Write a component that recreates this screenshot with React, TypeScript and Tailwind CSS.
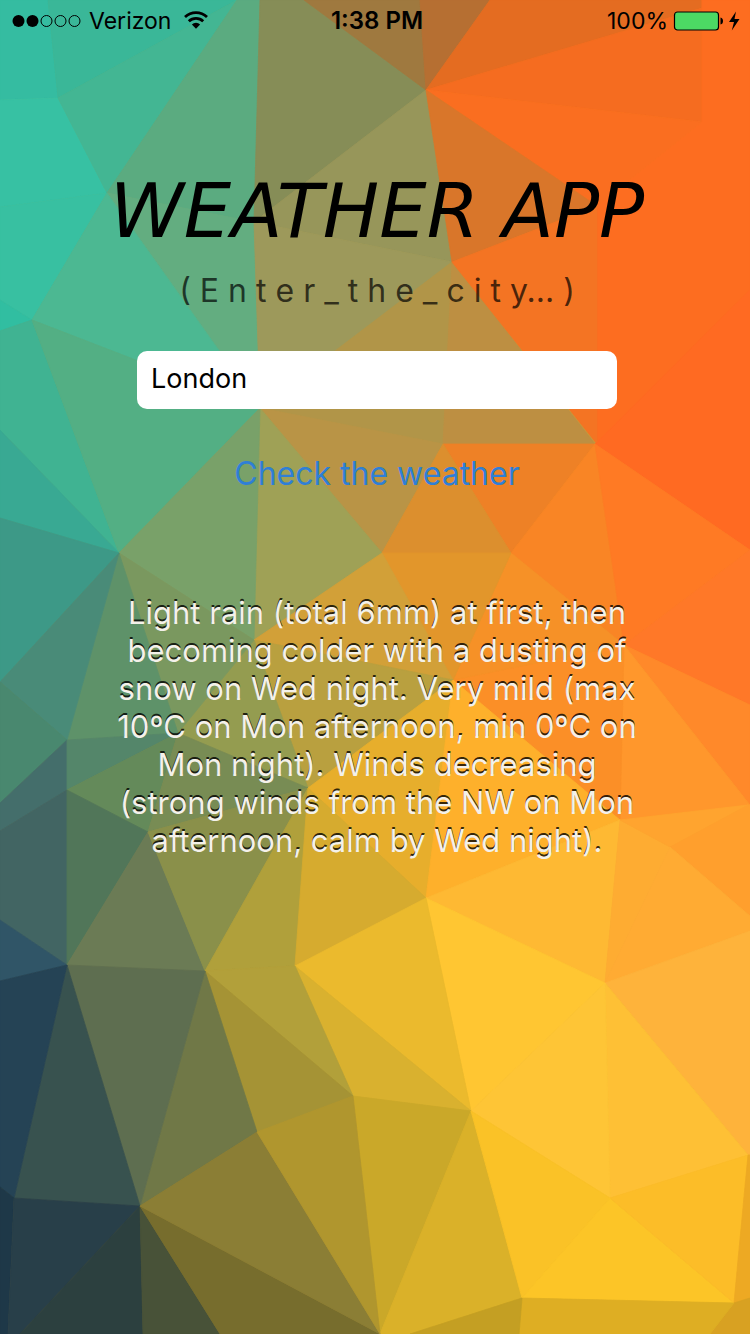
import { useState } from "react";

type Facet = [fill: string, points: string];

const FACETS: Facet[] = [
  // upper left
  ["#35bca1", "0,0 48,0 58,98 0,100"],
  ["#37c1a3", "0,100 58,98 107,193 0,207"],
  ["#38c0a1", "0,207 107,193 32,320 0,300"],
  ["#31bea1", "0,300 32,320 0,331"],
  ["#3ab798", "48,0 160,0 237,0 58,98"],
  ["#43b693", "58,98 237,0 107,193"],
  ["#5bab80", "237,0 260,0 254,222 107,193"],
  ["#63ad80", "107,193 254,222 260,408"],
  ["#4cb892", "107,193 260,408 32,320"],
  ["#40b392", "0,331 32,320 119,553 0,430"],
  ["#53af84", "32,320 260,408 119,553"],
  ["#39a993", "0,430 119,553 0,518"],
  ["#3d9987", "0,518 119,553 0,682"],
  // upper middle
  ["#868d57", "260,0 304,0 426,90 254,222"],
  ["#9f793f", "304,0 420,0 426,90"],
  ["#b66f32", "420,0 490,0 426,90"],
  ["#97965a", "426,90 452,262 254,222"],
  ["#9d995b", "254,222 452,262 260,408"],
  ["#b19548", "260,408 452,262 443,444"],
  ["#bd8f42", "452,262 595,444 443,444"],
  ["#b99446", "260,408 443,444 382,553"],
  ["#9fa156", "260,408 382,553 254,640"],
  ["#79a169", "260,408 254,640 119,553"],
  // upper right
  ["#e46c21", "490,0 702,0 702,8 426,90"],
  ["#f36e20", "702,0 750,0 750,140 702,122"],
  ["#f56c20", "426,90 702,8 702,122"],
  ["#fa6e20", "426,90 702,122 597,206"],
  ["#fd6d20", "702,0 750,0 750,300 597,444 597,206 702,122"],
  ["#d9762a", "426,90 597,206 452,262"],
  ["#f47423", "452,262 597,206 597,444"],
  ["#ff6a22", "750,290 750,550 595,444"],
  ["#ee8126", "443,444 595,444 511,553"],
  ["#dc8f2e", "443,444 511,553 382,553"],
  // middle right
  ["#f98525", "595,444 624,645 511,553"],
  ["#ff7a24", "595,444 750,550 624,645"],
  ["#ff7828", "750,550 750,705 624,645"],
  ["#ff892a", "624,645 750,705 750,805"],
  ["#ff972c", "624,645 750,805 620,820"],
  ["#fb8f27", "453,680 624,645 620,820"],
  ["#f69127", "511,553 624,645 453,680"],
  ["#e2962b", "382,553 511,553 453,680"],
  ["#d2a038", "382,553 453,680 254,640"],
  ["#b9a03f", "254,640 453,680 308,788"],
  ["#949c50", "254,640 308,788 178,733"],
  ["#7a985f", "119,553 254,640 178,733"],
  ["#5e9269", "119,553 178,733 67,740"],
  ["#498b78", "119,553 67,740 0,682"],
  ["#49886f", "0,682 67,740 0,803"],
  ["#446e6b", "67,740 67,790 0,831 0,803"],
  ["#426563", "67,790 67,965 0,920 0,831"],
  ["#305567", "0,920 67,965 0,981"],
  ["#54866a", "67,740 178,733 67,790"],
  ["#648a5a", "67,790 178,733 148,832"],
  ["#788c54", "178,733 308,788 148,832"],
  ["#517659", "67,790 148,832 67,965"],
  ["#6b7b55", "148,832 205,971 67,965"],
  ["#8a904a", "148,832 308,788 205,971"],
  ["#b0a03b", "308,788 295,966 205,971"],
  ["#e7ae2c", "308,788 453,680 426,898"],
  ["#feb02b", "453,680 620,820 426,898"],
  ["#d6ab2f", "308,788 426,898 295,966"],
  ["#feb933", "426,898 620,820 605,983"],
  ["#feac32", "620,820 670,847 605,983"],
  ["#ffa42f", "620,820 748,805 670,847"],
  ["#ff9f2d", "748,805 750,805 750,916 670,847"],
  ["#ffab33", "670,847 750,916 750,931 605,983"],
  // lower right
  ["#feb33b", "605,983 750,931 750,1155 748,1155"],
  ["#fec035", "605,983 748,1155 610,1198"],
  ["#ffc632", "426,898 605,983 471,1111"],
  ["#fec536", "605,983 610,1198 471,1111"],
  ["#ebba2d", "295,966 426,898 471,1111"],
  ["#d9b12f", "295,966 471,1111 353,1096"],
  ["#caa829", "353,1096 471,1111 380,1334"],
  ["#dab129", "471,1111 522,1298 410,1334 380,1334"],
  ["#fac227", "471,1111 610,1198 522,1298"],
  ["#fcc527", "610,1198 734,1303 522,1298"],
  ["#fcbd28", "610,1198 748,1155 734,1303"],
  ["#eda923", "748,1155 750,1155 750,1298 734,1303"],
  ["#d8a122", "734,1303 750,1298 750,1334 710,1334"],
  ["#deae23", "522,1298 734,1303 710,1334 519,1334"],
  ["#c49f23", "410,1334 522,1298 519,1334"],
  // lower left
  ["#b2a03a", "205,971 295,966 353,1096"],
  ["#a59335", "205,971 353,1096 257,1132"],
  ["#707847", "205,971 257,1132 140,1206"],
  ["#5e6e50", "67,965 205,971 140,1206"],
  ["#38524f", "67,965 140,1206 14,1198"],
  ["#254355", "0,981 67,965 14,1198 0,1187"],
  ["#1e3848", "0,1187 14,1198 8,1334 0,1334"],
  ["#283f49", "14,1198 140,1206 20,1334 8,1334"],
  ["#2c403f", "140,1206 143,1334 20,1334"],
  ["#485238", "140,1206 220,1334 143,1334"],
  ["#776d2d", "140,1206 380,1334 220,1334"],
  ["#8b7e35", "140,1206 257,1132 380,1334"],
  ["#b0962e", "257,1132 353,1096 380,1334"],
];

function Backdrop() {
  return (
    <svg
      aria-hidden="true"
      viewBox="0 0 750 1334"
      preserveAspectRatio="none"
      className="absolute inset-0 h-full w-full"
    >
      {FACETS.map(([fill, points]) => (
        <polygon key={points} points={points} fill={fill} stroke={fill} strokeWidth="0.8" strokeLinejoin="round" />
      ))}
    </svg>
  );
}

function StatusBar() {
  return (
    <header className="grid h-[42px] grid-cols-3 items-center pr-2 pl-3 text-[23px] text-black">
      <div className="flex items-center gap-2">
        <svg aria-hidden="true" width="69" height="14" viewBox="0 0 69 14">
          <circle cx="6.5" cy="7" r="6" />
          <circle cx="20.5" cy="7" r="6" />
          <g fill="none" stroke="black" strokeWidth="1">
            <circle cx="34.5" cy="7" r="5.5" />
            <circle cx="48.5" cy="7" r="5.5" />
            <circle cx="62.5" cy="7" r="5.5" />
          </g>
        </svg>
        <span>Verizon</span>
        <svg aria-hidden="true" width="34" height="20" viewBox="0 0 34 20" fill="none" stroke="black" strokeWidth="2.8">
          <path d="M6 6 A16 16 0 0 1 28 6" />
          <path d="M9.8 10.2 A10.4 10.4 0 0 1 24.2 10.2" />
          <path d="M17 17.800 L12.9 13.5 A5.8 5.8 0 0 1 21.1 13.5 Z" fill="black" stroke="none" />
        </svg>
      </div>
      <time className="text-center text-2xl font-semibold">1:38 PM</time>
      <div className="flex items-center justify-end gap-1">
        <span>100%</span>
        <svg aria-hidden="true" width="70" height="22" viewBox="0 0 70 22">
          <rect x="2.5" y="2" width="44" height="18" rx="3" fill="#4cd964" stroke="black" strokeWidth="1.2" />
          <path d="M48.5 7.5 Q51 8 51 11 Q51 14 48.5 14.5 Z" />
          <path d="M64 1.5 L57 12 H62 L59.8 20.5 L67.5 9 H62.5 Z" />
        </svg>
      </div>
    </header>
  );
}

export default function App() {
  const [city, setCity] = useState("London");

  return (
    <div className="relative min-h-screen overflow-hidden bg-[#c99a3a] font-['Inter','Liberation_Sans',sans-serif]">
      <Backdrop />
      <div className="relative">
        <StatusBar />
        <main className="flex flex-col items-center pt-[125px] pr-[106px] pl-[110px] text-center">
          <h1 className="font-['DejaVu_Sans',sans-serif] text-[75px] leading-[88px] whitespace-nowrap text-black italic">
            WEATHER APP
          </h1>
          <label htmlFor="city" className="mt-4 text-[32px] leading-[40px] whitespace-nowrap text-black/70">
            ( E n t e r _ t h e _ c i t y... )
          </label>
          <input
            id="city"
            type="text"
            value={city}
            onChange={(event) => setCity(event.target.value)}
            className="mt-10 h-[58px] w-full max-w-[480px] rounded-[10px] bg-white px-[14px] pb-[3px] text-[27px] text-black outline-none"
          />
          <button type="button" className="mt-[45px] text-[32px] leading-[40px] text-[#2f7fd6]">
            Check the weather
          </button>
          <p className="mt-[100px] text-[31px] leading-[38px] text-[#f4f1ea] [text-shadow:0_-2px_0_rgba(0,0,0,0.8)]">
            Light rain (total 6mm) at first, then becoming colder with a dusting of snow on Wed night. Very mild (max
            10ºC on Mon afternoon, min 0ºC on Mon night). Winds decreasing (strong winds from the NW on Mon afternoon,
            calm by Wed night).
          </p>
        </main>
      </div>
    </div>
  );
}
